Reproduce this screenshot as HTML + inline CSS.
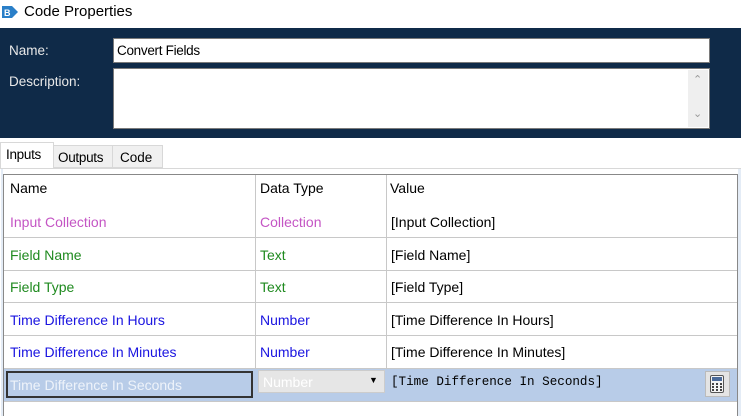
<!DOCTYPE html>
<html><head><style>
*{margin:0;padding:0;box-sizing:border-box}
body{width:741px;height:416px;background:#fff;font-family:"Liberation Sans",sans-serif;font-size:14px;position:relative;overflow:hidden}
.a{position:absolute}
.dark{left:0;top:28px;width:741px;height:110px;background:#0f2a48}
.lbl{color:#e8e8e8;font-size:13.5px}
.tb{background:#fff;border:1px solid #7a7a7a}
.cell{position:absolute;font-size:14px;line-height:16px}
.hl{position:absolute;left:4px;width:733px;height:1px;background:#c8c8c8}
.p{color:#c455c4}.g{color:#1f8a1f}.b{color:#1a14e0}
</style></head><body>
<svg class="a" style="left:1px;top:4px" width="18" height="16" viewBox="0 0 18 16"><path d="M1 2h10l6 6-6 6H1z" fill="#2a7fc8"/><text x="3" y="12" font-size="9" fill="#fff" font-family="Liberation Sans" font-weight="bold">B</text></svg>
<div class="a" style="left:24px;top:3px;font-size:15px">Code Properties</div>
<div class="a dark"></div>
<div class="a lbl" style="left:9px;top:43px">Name:</div>
<div class="a lbl" style="left:9px;top:74px">Description:</div>
<div class="a tb" style="left:113px;top:38px;width:597px;height:25px;padding:4px 3px;font-size:13.5px;letter-spacing:-0.3px">Convert Fields</div>
<div class="a tb" style="left:113px;top:68px;width:597px;height:61px"></div>
<div class="a" style="left:688px;top:70px;width:20px;height:57px;background:#efefef"></div>
<div class="a" style="left:693px;top:73px;color:#999;font-size:11px">&#8963;</div>
<div class="a" style="left:693px;top:107px;color:#999;font-size:11px">&#8964;</div>
<div class="a" style="left:0;top:142px;width:54px;height:27px;background:#fff;border:1px solid #d8d8d8;border-bottom:none"></div>
<div class="a" style="left:53px;top:145px;width:60px;height:23px;background:#f0f0f0;border:1px solid #d8d8d8"></div>
<div class="a" style="left:112px;top:145px;width:51px;height:23px;background:#f0f0f0;border:1px solid #d8d8d8"></div>
<div class="a" style="left:6px;top:147px;font-size:13.5px;letter-spacing:-0.3px">Inputs</div>
<div class="a" style="left:58px;top:150px;font-size:13.5px;letter-spacing:-0.3px">Outputs</div>
<div class="a" style="left:120px;top:150px;font-size:13.5px">Code</div>
<div class="a" style="left:0;top:168px;width:741px;height:1px;background:#d8d8d8"></div>
<div class="a" style="left:1px;top:169px;width:2px;height:247px;background:#e4ecf6"></div>
<div class="a" style="left:3px;top:174px;width:735px;height:242px;border-left:1px solid #888;border-top:1px solid #888;border-right:1px solid #888"></div>
<div class="a" style="left:738px;top:169px;width:3px;height:247px;background:#e4ecf6"></div>
<div class="a" style="left:255px;top:175px;width:1px;height:226px;background:#c8c8c8"></div>
<div class="a" style="left:386px;top:175px;width:1px;height:226px;background:#c8c8c8"></div>
<div class="hl" style="top:237px"></div><div class="hl" style="top:270px"></div><div class="hl" style="top:302px"></div><div class="hl" style="top:335px"></div><div class="hl" style="top:368px"></div><div class="hl" style="top:401px"></div>
<div class="cell" style="left:10px;top:180px">Name</div><div class="cell" style="left:260px;top:180px">Data Type</div><div class="cell" style="left:390px;top:180px">Value</div>
<div class="cell p" style="left:10px;top:214px">Input Collection</div><div class="cell p" style="left:260px;top:214px">Collection</div><div class="cell" style="left:391px;top:214px">[Input Collection]</div>
<div class="cell g" style="left:10px;top:247px">Field Name</div><div class="cell g" style="left:260px;top:247px">Text</div><div class="cell" style="left:391px;top:247px">[Field Name]</div>
<div class="cell g" style="left:10px;top:279px">Field Type</div><div class="cell g" style="left:260px;top:279px">Text</div><div class="cell" style="left:391px;top:279px">[Field Type]</div>
<div class="cell b" style="left:10px;top:312px">Time Difference In Hours</div><div class="cell b" style="left:260px;top:312px">Number</div><div class="cell" style="left:391px;top:312px">[Time Difference In Hours]</div>
<div class="cell b" style="left:10px;top:344px">Time Difference In Minutes</div><div class="cell b" style="left:260px;top:344px">Number</div><div class="cell" style="left:391px;top:344px">[Time Difference In Minutes]</div>
<div class="a" style="left:4px;top:369px;width:733px;height:32px;background:#b8cce8"></div>
<div class="a" style="left:6px;top:371px;width:247px;height:27px;border:2px solid #333;background:#b8cce8;color:#eef3fa;padding:4px 2px">Time Difference In Seconds</div>
<div class="a" style="left:258px;top:370px;width:127px;height:23px;background:#e6e6e6;border:1px solid #ccc;color:#fff;padding:3px 4px">Number</div>
<div class="a" style="left:369px;top:375px;font-size:9px">&#9660;</div>
<div class="a" style="left:391px;top:375px;font-family:'Liberation Mono',monospace;font-size:12.6px">[Time Difference In Seconds]</div>
<div class="a" style="left:705px;top:371px;width:25px;height:26px;background:#e4e4e4;border:1px solid #bbb"></div>
<svg class="a" style="left:710px;top:375px" width="14" height="18" viewBox="0 0 14 18"><rect x="0.5" y="0.5" width="13" height="17" rx="1.5" fill="#f4f4f4" stroke="#555"/><rect x="2" y="2" width="10" height="4" fill="#4a6a9a"/><g fill="#444"><rect x="2" y="8" width="2" height="2"/><rect x="6" y="8" width="2" height="2"/><rect x="10" y="8" width="2" height="2"/><rect x="2" y="11" width="2" height="2"/><rect x="6" y="11" width="2" height="2"/><rect x="10" y="11" width="2" height="2"/><rect x="2" y="14" width="2" height="2"/><rect x="6" y="14" width="2" height="2"/><rect x="10" y="14" width="2" height="2"/></g></svg>
</body></html>
